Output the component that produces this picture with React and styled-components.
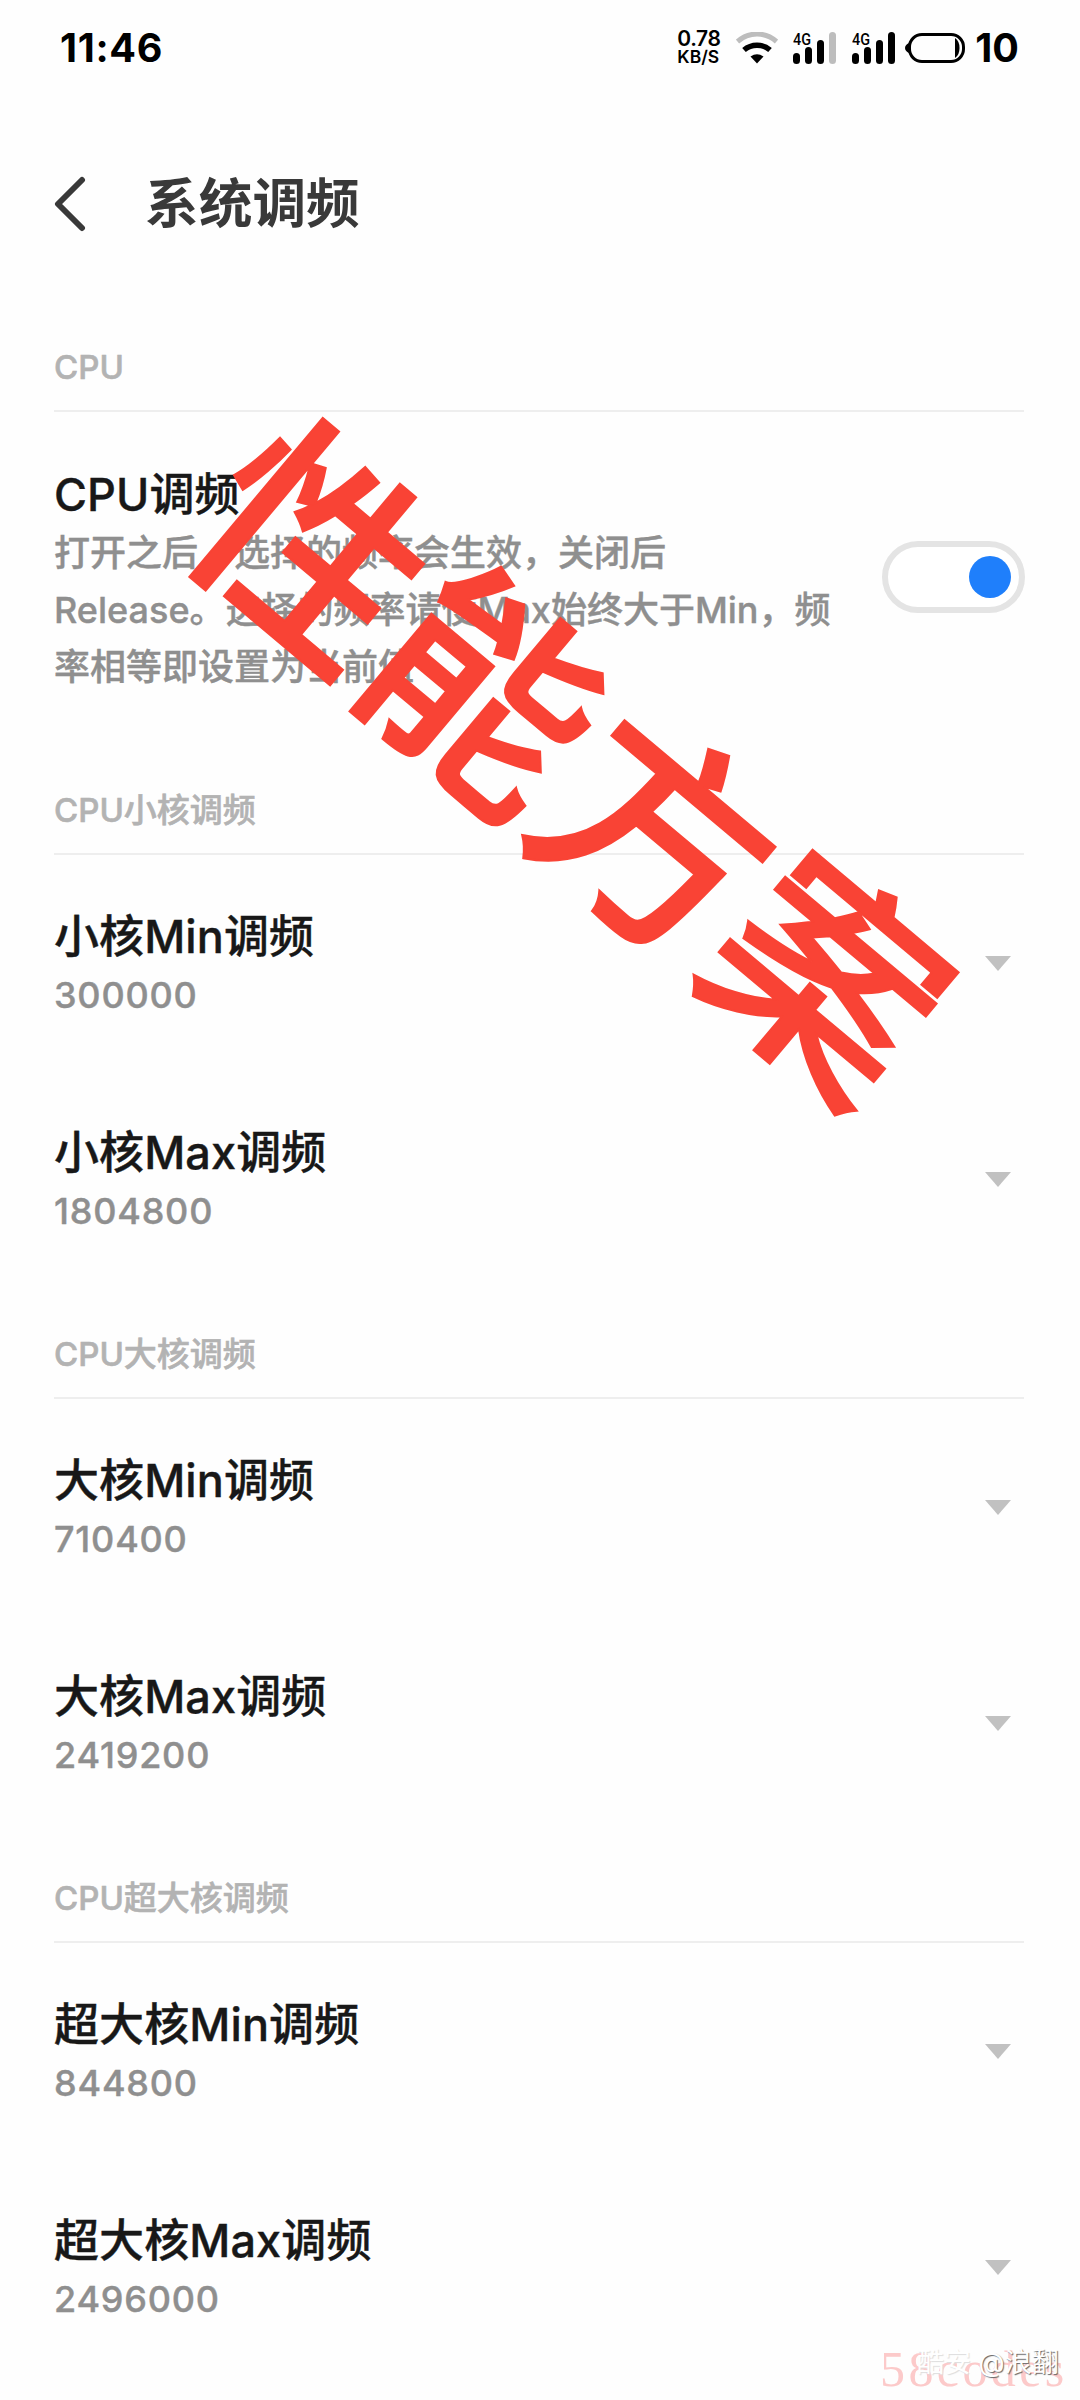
import styled, { createGlobalStyle } from 'styled-components';

const GlobalStyle = createGlobalStyle`
  * {
    box-sizing: border-box;
  }
  body {
    margin: 0;
    background-color: #fefefe;
  }
`;

const Tela = styled.div`
  background-color: #fefefe;
  font-family: Inter, 'Noto Sans CJK SC', sans-serif;
  height: 2400px;
  overflow: hidden;
  position: relative;
  width: 1080px;
`;

const BarraStatus = styled.div`
  align-items: center;
  color: #000;
  display: flex;
  height: 96px;
  justify-content: space-between;
  padding: 0 61px 0 60px;
`;

const Hora = styled.span`
  font-size: 39.5px;
  font-weight: 700;
  letter-spacing: 0.7px;
`;

const Indicadores = styled.div`
  align-items: center;
  display: flex;
`;

const Velocidade = styled.div`
  display: flex;
  flex-direction: column;
  font-weight: 600;
  margin-right: 16px;
  width: 43px;
`;

const Taxa = styled.span`
  font-size: 21px;
  letter-spacing: -0.4px;
  line-height: 18px;
`;

const Unidade = styled.span`
  font-size: 17.5px;
  line-height: 18px;
`;

const Icone = styled.svg`
  display: block;
  flex: none;
  margin-right: ${({ margem }) => margem || 0}px;
`;

const Bateria = styled.span`
  font-size: 39.5px;
  font-weight: 700;
  line-height: 46px;
  margin-bottom: 1px;
`;

const Cabecalho = styled.header`
  align-items: center;
  display: flex;
  gap: 57px;
  height: 216px;
  padding: 0 54px;
`;

const Titulo = styled.h1`
  color: #393939;
  font-size: 53.7px;
  font-weight: 700;
  line-height: 60px;
  margin: 0;
`;

const Secao = styled.section`
  margin: 0 56px 0 54px;
  padding-bottom: 12px;
`;

const TituloSecao = styled.h2`
  border-bottom: 2px solid #eee;
  color: #b3b3b3;
  font-size: 33px;
  font-weight: 500;
  height: 100px;
  line-height: 48px;
  margin: 0;
  padding-top: 31px;
  -webkit-text-stroke: 0.6px #b3b3b3;
`;

const Item = styled.div`
  align-items: center;
  display: flex;
  height: ${({ altura }) => altura || 216}px;
  justify-content: space-between;
  padding-bottom: 47px;
  padding-top: 52px;
`;

const Nome = styled.h3`
  color: #181818;
  font-size: 45px;
  font-weight: 500;
  letter-spacing: 0.1px;
  line-height: 60px;
  margin: 0;
  -webkit-text-stroke: 0.4px #181818;
`;

const Valor = styled.p`
  color: #8f8f8f;
  font-size: 36px;
  font-weight: 500;
  letter-spacing: ${({ numero }) => (numero ? 0.8 : 0)}px;
  line-height: 57px;
  margin: 0;
  white-space: pre-line;
  -webkit-text-stroke: 0.4px #8f8f8f;
`;

const Chave = styled.button`
  background-color: #fff;
  border: 6px solid #e4e4e4;
  border-radius: 36px;
  display: flex;
  height: 72px;
  justify-content: flex-end;
  margin: 0 -1px 6px 0;
  padding: 9px 8px;
  width: 143px;
`;

const Bolinha = styled.span`
  background-color: #1f7ffb;
  border-radius: 50%;
  height: 42px;
  width: 42px;
`;

const Faixa = styled.div`
  color: #f94335;
  font-family: 'Noto Sans CJK SC', sans-serif;
  font-size: 224px;
  font-weight: 500;
  left: 579px;
  line-height: 1;
  position: absolute;
  top: 753px;
  transform: translate(-50%, -50%) rotate(40deg);
  white-space: nowrap;
  -webkit-text-stroke: 2px #f94335;
`;

const Site = styled.div`
  color: #fccaca;
  font-family: 'Liberation Serif', serif;
  font-size: 50px;
  left: 880px;
  letter-spacing: 3.4px;
  line-height: 50px;
  position: absolute;
  top: 2344px;
`;

const Autor = styled.div`
  color: #fff;
  font-size: 27px;
  left: 917px;
  line-height: 32px;
  position: absolute;
  text-shadow: 1px 1px 1px #666;
  top: 2347px;
  white-space: nowrap;
`;

const Apagado = styled.span`
  text-shadow: 1px 1px 1px #ddd;
`;

const secoes = [
  {
    titulo: 'CPU小核调频',
    itens: [
      { nome: '小核Min调频', valor: '300000' },
      { nome: '小核Max调频', valor: '1804800' },
    ],
  },
  {
    titulo: 'CPU大核调频',
    itens: [
      { nome: '大核Min调频', valor: '710400' },
      { nome: '大核Max调频', valor: '2419200' },
    ],
  },
  {
    titulo: 'CPU超大核调频',
    itens: [
      { nome: '超大核Min调频', valor: '844800' },
      { nome: '超大核Max调频', valor: '2496000' },
    ],
  },
];

function Wifi() {
  return (
    <Icone width="42" height="32" viewBox="0 0 42 32" margem={15} fill="none">
      <path d="M1.5 9.5C13 -0.5 29 -0.5 40.5 9.5" stroke="#bdbdbd" strokeWidth="5" />
      <path d="M8 18C15.5 11.5 26.5 11.5 34 18" stroke="#000" strokeWidth="5.5" />
      <path d="M14.5 24.5Q21 20 27.5 24.5L21 31.5Z" fill="#000" />
    </Icone>
  );
}

function Sinal({ fraco, margem }) {
  return (
    <Icone width="44" height="40" viewBox="0 -4 44 40" margem={margem}>
      <text
        x="0"
        y="12.5"
        fontFamily="Roboto, sans-serif"
        fontSize="16"
        fontWeight="500"
        textLength="18"
        lengthAdjust="spacingAndGlyphs"
      >
        4G
      </text>
      <rect x="0" y="21" width="7" height="11" rx="3.5" />
      <rect x="12" y="15" width="7" height="17" rx="3.5" />
      <rect x="24" y="8" width="7" height="24" rx="3.5" />
      <rect x="36" y="0" width="7" height="32" rx="3.5" fill={fraco ? '#bdbdbd' : '#000'} />
    </Icone>
  );
}

function IconeBateria() {
  return (
    <Icone width="60" height="32" viewBox="0 0 60 32" margem={10}>
      <path d="M4 11Q0 13 0 16T4 21Z" />
      <rect x="4.5" y="2.5" width="54" height="27" rx="12.5" fill="none" stroke="#000" strokeWidth="3" />
      <path d="M50 6Q54.5 9 54.5 16T50 26Z" />
    </Icone>
  );
}

function Voltar() {
  return (
    <Icone width="34" height="56" viewBox="0 0 34 56" fill="none">
      <path
        d="M28 4L4 28L28 52"
        stroke="#393939"
        strokeWidth="6"
        strokeLinecap="round"
        strokeLinejoin="round"
      />
    </Icone>
  );
}

const Direita = styled.div`
  margin-bottom: 5px;
`;

function Seta() {
  return (
    <Direita>
      <Icone width="26" height="15" viewBox="0 0 26 15" margem={13}>
        <path d="M0 0H26L13 15Z" fill="#c1c1c1" />
      </Icone>
    </Direita>
  );
}

function Opcao({ nome, valor }) {
  return (
    <Item>
      <div>
        <Nome>{nome}</Nome>
        <Valor numero>{valor}</Valor>
      </div>
      <Seta />
    </Item>
  );
}

function App() {
  return (
    <Tela>
      <GlobalStyle />
      <BarraStatus>
        <Hora>11:46</Hora>
        <Indicadores>
          <Velocidade>
            <Taxa>0.78</Taxa>
            <Unidade>KB/S</Unidade>
          </Velocidade>
          <Wifi />
          <Sinal fraco margem={15} />
          <Sinal margem={9} />
          <IconeBateria />
          <Bateria>10</Bateria>
        </Indicadores>
      </BarraStatus>
      <Cabecalho>
        <Voltar />
        <Titulo>系统调频</Titulo>
      </Cabecalho>
      <Secao>
        <TituloSecao>CPU</TituloSecao>
        <Item altura={331}>
          <div>
            <Nome>CPU调频</Nome>
            <Valor>
              {'打开之后，选择的频率会生效，关闭后\nRelease。选择的频率请使Max始终大于Min，频\n率相等即设置为当前值'}
            </Valor>
          </div>
          <Chave>
            <Bolinha />
          </Chave>
        </Item>
      </Secao>
      {secoes.map((secao) => (
        <Secao key={secao.titulo}>
          <TituloSecao>{secao.titulo}</TituloSecao>
          {secao.itens.map((item) => (
            <Opcao key={item.nome} {...item} />
          ))}
        </Secao>
      ))}
      <Faixa>性能方案</Faixa>
      <Site>58codes</Site>
      <Autor>
        <Apagado>酷安</Apagado> @浪翻
      </Autor>
    </Tela>
  );
}
export default App;
